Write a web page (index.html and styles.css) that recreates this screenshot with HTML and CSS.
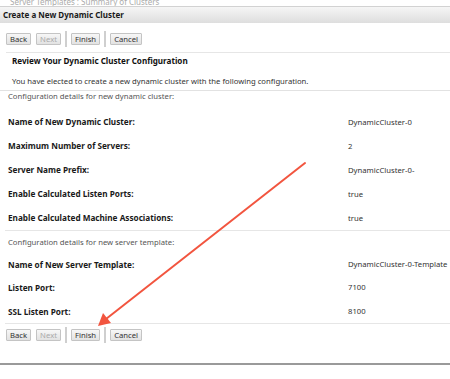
FILE: index.html
```html
<!DOCTYPE html>
<html lang="en">
<head>
  <meta charset="UTF-8">
  <title>Create a New Dynamic Cluster</title>
  <link rel="stylesheet" href="styles.css">
</head>
<body>
  <div class="crumb">Server Templates : Summary of Clusters</div>

  <section class="panel">
    <h1 class="panel-title">Create a New Dynamic Cluster</h1>

    <div class="button-bar">
      <button class="btn">Back</button>
      <button class="btn" disabled>Next</button>
      <span class="sep"></span>
      <button class="btn">Finish</button>
      <span class="sep"></span>
      <button class="btn">Cancel</button>
    </div>

    <div class="review">
      <h2>Review Your Dynamic Cluster Configuration</h2>
      <p>You have elected to create a new dynamic cluster with the following configuration.</p>
    </div>

    <div class="details">
      <p class="intro">Configuration details for new dynamic cluster:</p>
      <div class="row"><span class="label">Name of New Dynamic Cluster:</span><span class="value">DynamicCluster-0</span></div>
      <div class="row"><span class="label">Maximum Number of Servers:</span><span class="value">2</span></div>
      <div class="row"><span class="label">Server Name Prefix:</span><span class="value">DynamicCluster-0-</span></div>
      <div class="row"><span class="label">Enable Calculated Listen Ports:</span><span class="value">true</span></div>
      <div class="row"><span class="label">Enable Calculated Machine Associations:</span><span class="value">true</span></div>
    </div>

    <div class="details second">
      <p class="intro">Configuration details for new server template:</p>
      <div class="row"><span class="label">Name of New Server Template:</span><span class="value">DynamicCluster-0-Template</span></div>
      <div class="row"><span class="label">Listen Port:</span><span class="value">7100</span></div>
      <div class="row"><span class="label">SSL Listen Port:</span><span class="value">8100</span></div>
    </div>

    <div class="button-bar bottom">
      <button class="btn">Back</button>
      <button class="btn" disabled>Next</button>
      <span class="sep"></span>
      <button class="btn">Finish</button>
      <span class="sep"></span>
      <button class="btn">Cancel</button>
    </div>
  </section>

  <!-- annotation arrow pointing at the bottom Finish button -->
  <svg class="arrow" width="450" height="379" viewBox="0 0 450 379">
    <line x1="305" y1="163" x2="106" y2="319" stroke="#f2553f" stroke-width="2" stroke-linecap="round"/>
    <polygon points="98,326 103,313 111,323" fill="#f2553f"/>
  </svg>
</body>
</html>
```

FILE: styles.css
```css
body {
  margin: 0;
  background-color: #fff;
  font-family: 'Noto Sans', 'DejaVu Sans', sans-serif;
  font-size: 7.7px;
  color: #222;
  overflow: hidden;
}

.crumb {
  height: 6px;
  line-height: 4px;
  padding-left: 10px;
  color: #aaa;
  overflow: hidden;
  font-size: 8px;
}

.panel {
  border-top: 1px solid #d2d2d2;
  border-bottom: 2px solid #9a9a9a;
  padding-bottom: 15px;
}

.panel-title {
  margin: 0;
  height: 16px;
  line-height: 16px;
  padding-left: 3px;
  font-size: 8px;
  font-weight: bold;
  color: #1a1a1a;
  background: linear-gradient(#f6f6f6, #dedede);
}

.button-bar {
  display: flex;
  align-items: center;
  gap: 4px;
  height: 16px;
  margin: 8px 0 0 6px;
  padding-bottom: 5px;
  border-bottom: 1px solid #e6e6e6;
}

.button-bar.bottom {
  margin-top: 0;
  padding-top: 3px;
  border-bottom: none;
}

.btn {
  height: 12px;
  padding: 0 3px;
  font-family: inherit;
  font-size: 7.7px;
  line-height: 10px;
  color: #333;
  border: 1px solid #c4c4c4;
  border-radius: 1px;
  background: linear-gradient(#f7f7f7, #e2e2e2);
}

.btn:disabled {
  color: #aaa;
}

.btn + .btn {
  margin-left: 1px;
}

.sep {
  width: 2px;
  height: 16px;
  background-color: #cfcfcf;
}

.review {
  padding: 3px 12px 0;
  height: 34px;
  border-bottom: 1px solid #e2e2e2;
}

.review h2 {
  margin: 0;
  font-size: 8.1px;
  font-weight: bold;
  line-height: 10px;
  color: #111;
}

.review p {
  margin: 10px 0 0;
  line-height: 10px;
  color: #333;
}

.details {
  margin-left: 5px;
  border-bottom: 1px solid #e6e6e6;
}

.intro {
  margin: 0;
  height: 19.4px;
  line-height: 10px;
  padding-left: 3px;
  color: #555;
}

.second .intro {
  height: 16px;
  padding-top: 5.5px;
}

.row {
  display: flex;
  height: 24px;
  line-height: 24px;
  padding-left: 3px;
}

.second .row {
  height: 23.5px;
  line-height: 23.5px;
}

.label {
  width: 340px;
  font-size: 8.2px;
  font-weight: bold;
  color: #1a1a1a;
}

.value {
  color: #333;
}

.arrow {
  position: absolute;
  left: 0;
  top: 0;
  pointer-events: none;
}
```
